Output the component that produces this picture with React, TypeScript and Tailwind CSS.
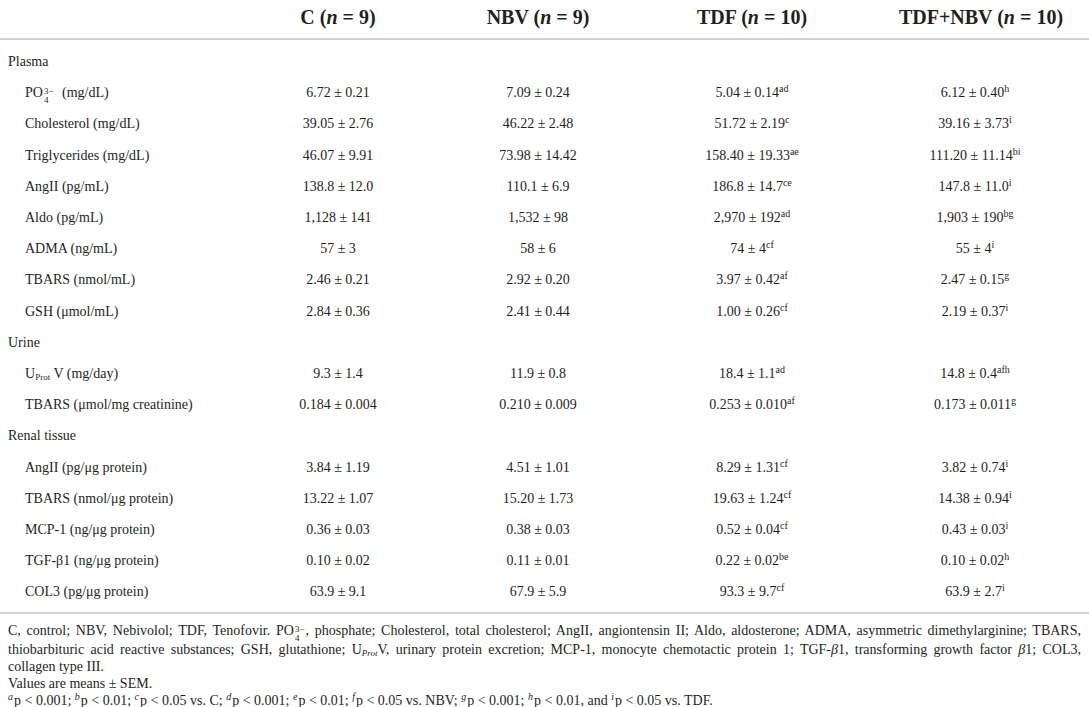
import type { ReactNode } from "react";

type Val = [string, string?];
type Row =
  | { section: string }
  | { label: ReactNode; vals: [Val, Val, Val, Val] };

const Po4 = () => (
  <span>
    PO
    <span className="mx-[1px] inline-flex translate-y-[2px] flex-col align-middle text-[9px] leading-[9px]">
      <span>3−</span>
      <span>4</span>
    </span>
  </span>
);

const rows: Row[] = [
  { section: "Plasma" },
  { label: <><Po4 /> <span className="ml-1">(mg/dL)</span></>, vals: [["6.72 ± 0.21"], ["7.09 ± 0.24"], ["5.04 ± 0.14", "ad"], ["6.12 ± 0.40", "h"]] },
  { label: "Cholesterol (mg/dL)", vals: [["39.05 ± 2.76"], ["46.22 ± 2.48"], ["51.72 ± 2.19", "c"], ["39.16 ± 3.73", "i"]] },
  { label: "Triglycerides (mg/dL)", vals: [["46.07 ± 9.91"], ["73.98 ± 14.42"], ["158.40 ± 19.33", "ae"], ["111.20 ± 11.14", "bi"]] },
  { label: "AngII (pg/mL)", vals: [["138.8 ± 12.0"], ["110.1 ± 6.9"], ["186.8 ± 14.7", "ce"], ["147.8 ± 11.0", "i"]] },
  { label: "Aldo (pg/mL)", vals: [["1,128 ± 141"], ["1,532 ± 98"], ["2,970 ± 192", "ad"], ["1,903 ± 190", "bg"]] },
  { label: "ADMA (ng/mL)", vals: [["57 ± 3"], ["58 ± 6"], ["74 ± 4", "cf"], ["55 ± 4", "i"]] },
  { label: "TBARS (nmol/mL)", vals: [["2.46 ± 0.21"], ["2.92 ± 0.20"], ["3.97 ± 0.42", "af"], ["2.47 ± 0.15", "g"]] },
  { label: "GSH (μmol/mL)", vals: [["2.84 ± 0.36"], ["2.41 ± 0.44"], ["1.00 ± 0.26", "cf"], ["2.19 ± 0.37", "i"]] },
  { section: "Urine" },
  {
    label: (
      <>
        U<sub className="text-[9px]">Prot</sub> V (mg/day)
      </>
    ),
    vals: [["9.3 ± 1.4"], ["11.9 ± 0.8"], ["18.4 ± 1.1", "ad"], ["14.8 ± 0.4", "afh"]],
  },
  { label: "TBARS (μmol/mg creatinine)", vals: [["0.184 ± 0.004"], ["0.210 ± 0.009"], ["0.253 ± 0.010", "af"], ["0.173 ± 0.011", "g"]] },
  { section: "Renal tissue" },
  { label: "AngII (pg/μg protein)", vals: [["3.84 ± 1.19"], ["4.51 ± 1.01"], ["8.29 ± 1.31", "cf"], ["3.82 ± 0.74", "i"]] },
  { label: "TBARS (nmol/μg protein)", vals: [["13.22 ± 1.07"], ["15.20 ± 1.73"], ["19.63 ± 1.24", "cf"], ["14.38 ± 0.94", "i"]] },
  { label: "MCP-1 (ng/μg protein)", vals: [["0.36 ± 0.03"], ["0.38 ± 0.03"], ["0.52 ± 0.04", "cf"], ["0.43 ± 0.03", "i"]] },
  { label: "TGF-β1 (ng/μg protein)", vals: [["0.10 ± 0.02"], ["0.11 ± 0.01"], ["0.22 ± 0.02", "be"], ["0.10 ± 0.02", "h"]] },
  { label: "COL3 (pg/μg protein)", vals: [["63.9 ± 9.1"], ["67.9 ± 5.9"], ["93.3 ± 9.7", "cf"], ["63.9 ± 2.7", "i"]] },
];

const grid = "grid grid-cols-[240px_196px_204px_224px_222px]";

const Sup = ({ children }: { children: ReactNode }) => (
  <sup className="text-[10px]">{children}</sup>
);
const ISup = ({ children }: { children: ReactNode }) => (
  <sup className="mr-[1px] text-[10px] italic">{children}</sup>
);

// header label with math-style spacing round "="
const Head = ({ name, n }: { name: ReactNode; n: number }) => (
  <div className="text-center">
    {name} (<i>n</i>
    <span className="mx-[5px]">=</span>
    {n})
  </div>
);

export default function App() {
  return (
    <div className="h-[707px] w-[1089px] overflow-hidden bg-white font-['Liberation_Serif',serif] text-[#231f20]">
      {/* header */}
      <div className={`${grid} h-[40px] items-start border-b-2 border-[#d2d2d2] pt-[2px] text-[20px] font-bold`}>
        <div />
        <Head name="C" n={9} />
        <Head name="NBV" n={9} />
        <Head name="TDF" n={10} />
        <div className="pl-[12px]">
          <Head name="TDF+NBV" n={10} />
        </div>
      </div>

      <div className="pb-[5px] pt-[6px] text-[14px]">
        {rows.map((r, i) =>
          "section" in r ? (
            <div key={i} className="flex h-[31.2px] items-center pl-[8px]">
              {r.section}
            </div>
          ) : (
            <div key={i} className={`${grid} h-[31.2px] items-center`}>
              <div className="pl-[25px]">{r.label}</div>
              {r.vals.map(([v, s], j) => (
                <div key={j} className="text-center">
                  {v}
                  {s && <Sup>{s}</Sup>}
                </div>
              ))}
            </div>
          )
        )}
      </div>

      {/* footnotes */}
      <div className="border-t-2 border-[#d2d2d2] px-[8px] pt-[8px] text-[14px] leading-[17px]">
        <div className="text-justify [text-align-last:justify]">
          C, control; NBV, Nebivolol; TDF, Tenofovir. <Po4 />, phosphate; Cholesterol, total cholesterol; AngII,
          angiontensin II; Aldo, aldosterone; ADMA, asymmetric dimethylarginine; TBARS,
        </div>
        <div className="text-justify [text-align-last:justify]">
          thiobarbituric acid reactive substances; GSH, glutathione; U
          <sub className="text-[9px] italic">Prot</sub>V, urinary protein excretion; MCP-1, monocyte chemotactic
          protein 1; TGF-<i>β</i>1, transforming growth factor <i>β</i>1; COL3,
        </div>
        <div>collagen type III.</div>
        <div>Values are means ± SEM.</div>
        <div>
          <ISup>a</ISup>p &lt; 0.001; <ISup>b</ISup>p &lt; 0.01; <ISup>c</ISup>p &lt; 0.05 vs. C; <ISup>d</ISup>p
          &lt; 0.001; <ISup>e</ISup>p &lt; 0.01; <ISup>f</ISup>p &lt; 0.05 vs. NBV; <ISup>g</ISup>p &lt; 0.001;{" "}
          <ISup>h</ISup>p &lt; 0.01, and <ISup>i</ISup>p &lt; 0.05 vs. TDF.
        </div>
      </div>
    </div>
  );
}
